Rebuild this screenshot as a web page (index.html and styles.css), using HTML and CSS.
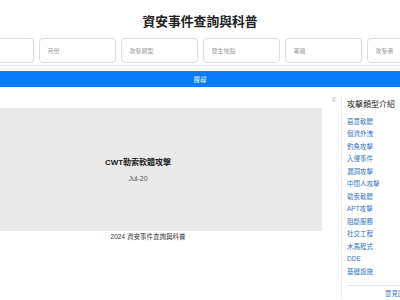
FILE: index.html
```html
<!DOCTYPE html>
<html lang="zh-Hant">

<head>
    <meta charset="UTF-8">
    <meta name="viewport" content="width=device-width, initial-scale=1.0">
    <title>資安事件查詢與科普</title>
    <link rel="stylesheet" href="styles.css">
</head>

<body>
    <div class="header">
        <h1>資安事件查詢與科普</h1>
    </div>

    <form class="search" id="searchForm">
        <div class="filters">
            <input type="text" name="year" placeholder="年份">
            <input type="text" name="month" placeholder="月份">
            <input type="text" name="type" placeholder="攻擊類型">
            <input type="text" name="place" placeholder="發生地點">
            <input type="text" name="level" placeholder="等級">
            <input type="text" name="attacker" placeholder="攻擊者">
        </div>
        <button type="submit" class="search-button">搜尋</button>
    </form>

    <div class="content">
        <div class="main">
            <div class="card">
                <h3>CWT勒索軟體攻擊</h3>
                <p>Jul-20</p>
            </div>
            <div class="footer">2024 資安事件查詢與科普</div>
        </div>

        <span class="icon">©</span>

        <div class="sidebar">
            <h4>攻擊類型介紹</h4>
            <ul>
                <li><a href="#">惡意軟體</a></li>
                <li><a href="#">個資外洩</a></li>
                <li><a href="#">釣魚攻擊</a></li>
                <li><a href="#">入侵事件</a></li>
                <li><a href="#">漏洞攻擊</a></li>
                <li><a href="#">中間人攻擊</a></li>
                <li><a href="#">勒索軟體</a></li>
                <li><a href="#">APT攻擊</a></li>
                <li><a href="#">阻斷服務</a></li>
                <li><a href="#">社交工程</a></li>
                <li><a href="#">木馬程式</a></li>
                <li><a href="#">DDE</a></li>
                <li><a href="#">基礎設施</a></li>
            </ul>
            <div class="more"><a href="#">意見回饋</a></div>
        </div>
    </div>
</body>

</html>
```

FILE: styles.css
```css
/* Global styles */
body {
    margin: 0;
    width: 400px;
    height: 300px;
    overflow: hidden;
    font-family: "Liberation Sans", "Noto Sans CJK TC", sans-serif;
    color: #333;
    background-color: #fff;
}

.header h1 {
    margin: 14px 0 0;
    font-size: 12.8px;
    line-height: 16px;
    text-align: center;
    color: #222;
}

/* Search form */
.search {
    margin-top: 8px;
}

.filters {
    display: flex;
    justify-content: center;
    gap: 5px;
    padding-bottom: 2px;
    border-bottom: 1px solid #eee;
}

.filters input {
    flex: 0 0 auto;
    box-sizing: border-box;
    width: 77px;
    height: 25px;
    padding: 0 8px;
    border: 1px solid #ddd;
    border-radius: 4px;
    font-family: inherit;
    font-size: 6px;
    color: #555;
}

.filters input::placeholder {
    color: #999;
}

.search-button {
    display: block;
    width: 100%;
    height: 16px;
    margin-top: 5px;
    padding: 0;
    border: none;
    background-color: #0a7bff;
    color: #fff;
    font-family: inherit;
    font-size: 6.5px;
    cursor: pointer;
}

/* Content */
.content {
    display: flex;
    align-items: flex-start;
    margin-top: 8px;
}

.main {
    flex: 0 0 auto;
    width: 348px;
    margin-left: -26px;
    padding-top: 13px;
}

.card {
    display: flex;
    flex-direction: column;
    align-items: center;
    justify-content: center;
    width: 368px;
    height: 123px;
    margin-left: -20px;
    padding-top: 2px;
    box-sizing: border-box;
    background-color: #e9e9e9;
}

.card h3 {
    margin: 0;
    font-size: 8px;
    line-height: 10px;
    color: #222;
}

.card p {
    margin: 6.5px 0 0;
    font-size: 7px;
    line-height: 9px;
    color: #555;
}

.footer {
    margin-top: 1px;
    font-size: 6.5px;
    line-height: 10px;
    text-align: center;
    color: #333;
}

.icon {
    flex: 0 0 auto;
    margin-left: 10px;
    width: 7px;
    font-size: 5px;
    line-height: 10px;
    color: #777;
}

/* Sidebar */
.sidebar {
    flex: 0 0 auto;
    width: 64px;
    margin-left: 2px;
    padding: 5px 0 0 5px;
    border-left: 1px solid #eee;
}

.sidebar h4 {
    margin: 0;
    font-size: 8px;
    line-height: 10px;
    font-weight: normal;
    color: #222;
}

.sidebar ul {
    margin: 5.75px 0 0;
    padding: 0;
    list-style: none;
}

.sidebar li {
    font-size: 6.5px;
    line-height: 12.5px;
}

.sidebar a {
    color: #3674c2;
    text-decoration: none;
}

.more {
    margin-top: 7px;
    padding-top: 3px;
    border-top: 1px solid #e5e5e5;
    font-size: 6.5px;
    line-height: 10px;
    text-align: right;
}
```
